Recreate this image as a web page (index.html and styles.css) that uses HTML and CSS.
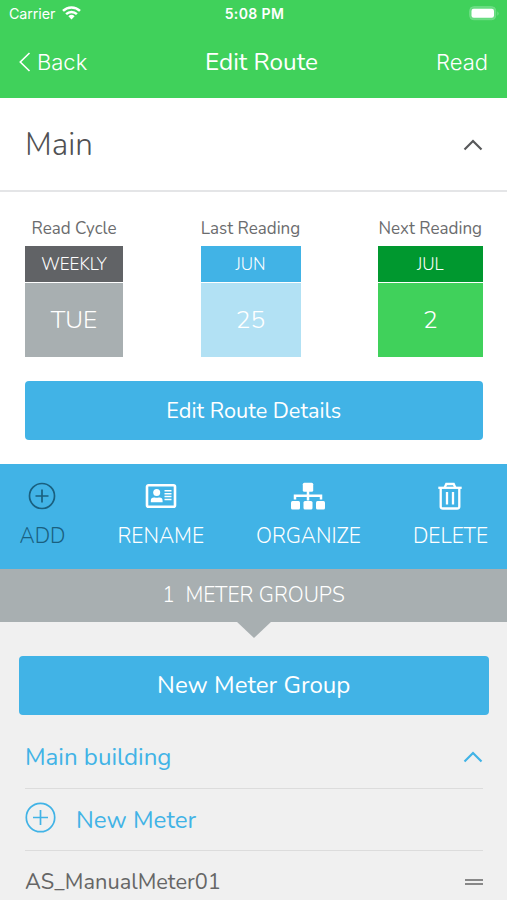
FILE: index.html
```html
<!DOCTYPE html>
<html lang="en">
<head>
<meta charset="utf-8">
<title>Edit Route</title>
<link rel="stylesheet" href="styles.css">
</head>
<body>
<header class="header">
  <div class="status">
    <div class="carrier"><span>Carrier</span>
      <svg width="19" height="14" viewBox="0 0 19 14"><g fill="none" stroke="#fff" stroke-width="2.500"><path d="M1 4.900a12.200 12.200 0 0 1 17 0"/><path d="M4.100 8.200a7.800 7.800 0 0 1 10.800 0"/></g><path d="M6.400 10.300a4.500 4.500 0 0 1 6.200 0L9.500 13.600z" fill="#fff"/></svg>
    </div>
    <span class="time">5:08 PM</span>
    <div class="battery"><svg width="31" height="15" viewBox="0 0 31 15"><rect x=".7" y=".7" width="26" height="13" rx="4" fill="#67dc80" stroke="#72de88"/><rect x="2.500" y="2.700" width="22.500" height="9" rx="2.200" fill="#fff"/><path d="M28.500 5.200q2 2.300 0 4.600z" fill="#83e296"/></svg></div>
  </div>
  <nav class="nav">
    <a class="back"><svg width="12" height="20" viewBox="0 0 12 20"><path d="M10.500 1 1.300 10l9.200 9" fill="none" stroke="#fff" stroke-width="1.600"/></svg><span>Back</span></a>
    <h1>Edit Route</h1>
    <a class="read">Read</a>
  </nav>
</header>
<section class="route-title"><h2>Main</h2>
  <svg width="20" height="12" viewBox="0 0 20 12"><path d="M1.500 10.500 10 2l8.500 8.500" fill="none" stroke="#58595b" stroke-width="2.200"/></svg>
</section>
<section class="details">
  <div class="cards">
    <div class="card cycle"><span class="label">Read Cycle</span><div class="top"><span>WEEKLY</span></div><div class="value"><span>TUE</span></div></div>
    <div class="card last"><span class="label">Last Reading</span><div class="top"><span>JUN</span></div><div class="value"><span>25</span></div></div>
    <div class="card next"><span class="label">Next Reading</span><div class="top"><span>JUL</span></div><div class="value"><span>2</span></div></div>
  </div>
  <button class="btn edit"><span>Edit Route Details</span></button>
</section>
<section class="toolbar">
  <div class="tool add"><svg width="28" height="28" viewBox="0 0 28 28"><g fill="none" stroke="#1a607f" stroke-width="1.700"><circle cx="14" cy="14" r="12.500"/><path d="M14 7.500v13M7.500 14h13"/></g></svg><span>ADD</span></div>
  <div class="tool rename"><svg width="32" height="28" viewBox="0 0 32 28"><rect x="2" y="3.300" width="28" height="21.400" rx="1.500" fill="none" stroke="#fff" stroke-width="2.600"/><g fill="#fff"><circle cx="11.700" cy="10.400" r="3.500"/><path d="M5.800 20.200v-1.500q0-3.300 3.200-3.300h.7q2 .9 4 0h.7q3.200 0 3.200 3.300v1.500z"/><path d="M19.500 8h7v1.500h-7zM19.500 10.900h7v1.500h-7zM19.500 13.800h7v1.500h-7zM19.500 16.700h7v1.500h-7z"/></g></svg><span>RENAME</span></div>
  <div class="tool organize"><svg width="36" height="28" viewBox="0 0 36 28"><g fill="#fff"><rect x="12.800" y=".7" width="10.400" height="9" rx="1.500"/><rect x="1" y="19" width="9" height="8.500" rx="1.500"/><rect x="13.500" y="19" width="9" height="8.500" rx="1.500"/><rect x="26" y="19" width="9" height="8.500" rx="1.500"/></g><path d="M5 17.500v-3.700h26v3.700M18 9v9.500" fill="none" stroke="#fff" stroke-width="2.500"/></svg><span>ORGANIZE</span></div>
  <div class="tool delete"><svg width="24" height="28" viewBox="0 0 24 28"><g fill="none" stroke="#fff" stroke-width="2.300"><path d="M.3 5.800h23.400"/><path d="M6.500 6 8.300 2h7.400L17.500 6"/><path d="M2.700 6v18.500q0 2 2 2h14.600q2 0 2-2V6"/><path d="M9 10v12.500M15 10v12.500"/></g></svg><span>DELETE</span></div>
</section>
<div class="groups-bar"><span>1&nbsp; METER GROUPS</span></div>
<main class="groups">
  <button class="btn new-group"><span>New Meter Group</span></button>
  <div class="row building"><span>Main building</span><svg width="20" height="12" viewBox="0 0 20 12"><path d="M1.500 10.500 10 2l8.500 8.500" fill="none" stroke="#41b3e6" stroke-width="2.200"/></svg></div>
  <div class="row new-meter"><svg width="31" height="31" viewBox="0 0 31 31"><g fill="none" stroke="#41b3e6" stroke-width="1.700"><circle cx="15.500" cy="15.500" r="14.200"/><path d="M15.500 8v15M8 15.500h15"/></g></svg><span>New Meter</span></div>
  <div class="row meter"><span>AS_ManualMeter01</span><i class="handle"></i></div>
</main>
</body>
</html>
```
FILE: styles.css
```css
* { box-sizing: border-box; }
html, body { margin: 0; height: 900px; overflow: hidden; }
body { width: 507px; background: #f0f0f0; color: #6b6c6e; font-family: Nunito, "Open Sans", sans-serif; font-weight: 400; }
svg { display: block; flex: none; }
span, h1, h2 { white-space: nowrap; }
h1, h2 { margin: 0; font-weight: inherit; }
.header { height: 98px; background: #40d15b; color: #fff; }
.status { height: 28px; padding: 0 7px 0 9px; display: grid; grid-template-columns: 1fr auto 1fr; align-items: center; font: 400 14.3px/28px Inter, sans-serif; }
.carrier { display: flex; align-items: center; gap: 7px; margin-top: -2px; }
.carrier span { letter-spacing: -.1px; padding-top: 1px; }
.time { font-weight: 600; font-size: 14px; letter-spacing: .4px; }
.battery { justify-self: end; margin-top: -2px; }
.nav { height: 68px; padding: 0 19px; display: grid; grid-template-columns: 1fr auto 1fr; align-items: center; font: 300 22px/68px Inter, sans-serif; }
.back { display: flex; align-items: center; gap: 6px; }
.nav h1 { font: 400 24.3px/68px Nunito, "Open Sans", sans-serif; margin-left: 16px; }
.read { justify-self: end; }
.route-title { height: 94px; background: #fff; border-bottom: 2px solid #e4e5e7; padding: 0 24px 0 25px; display: flex; align-items: center; justify-content: space-between; }
.route-title h2 { font-size: 31.5px; font-weight: 350; color: #505153; }
.route-title svg { margin-top: 2px; }
.details { height: 272px; background: #fff; padding: 24px 24.5px 0 25px; }
.cards { display: flex; justify-content: space-between; }
.card { display: flex; flex-direction: column; }
.cycle { width: 98px; } .last { width: 100px; } .next { width: 104.5px; }
.label { font-size: 17px; line-height: 26px; height: 30px; align-self: center; }
.top { height: 36px; display: flex; align-items: center; justify-content: center; font-size: 17px; font-weight: 350; color: #fff; margin-bottom: 1px; }
.value { height: 74px; display: flex; align-items: center; justify-content: center; font-size: 24.5px; font-weight: 350; color: #fff; }
.cycle .top { background: #616366; } .cycle .value { background: #a8afb1; }
.last .top { background: #41b3e6; } .last .value { background: #b2e1f4; }
.next .top { background: #00982f; } .next .value { background: #40d15b; }
.btn { display: flex; width: 100%; height: 59px; align-items: center; justify-content: center; border: 0; border-radius: 4px; background: #41b3e6; color: #fff; font: inherit; padding: 0; }
.btn.edit { margin-top: 24px; font-size: 21.7px; }
.toolbar { height: 105px; background: #41b3e6; padding: 18px 19px 0 19.5px; display: flex; justify-content: space-between; color: #fff; font-size: 21px; font-weight: 350; }
.tool { display: flex; flex-direction: column; align-items: center; gap: 10px; line-height: 32px; }
.add { color: #1a607f; }
.add svg { margin-left: -1px; }
.groups-bar { position: relative; height: 52.5px; background: #a8afb1; color: #fff; display: flex; align-items: center; justify-content: center; font-size: 21px; font-weight: 350; }
.groups-bar::after { content: ""; position: absolute; top: 52px; left: 236px; width: 36px; height: 17px; background: #a8afb1; clip-path: polygon(0 0, 100% 0, 50% 100%); }
.groups { padding: 34.5px 18.5px 0 19px; color: #41b3e6; font-size: 24.1px; }
.btn.new-group { height: 58.5px; }
.row { margin: 0 6px; height: 62px; display: flex; align-items: center; justify-content: space-between; border-bottom: 1px solid #dcdcdc; }
.building { height: 74.5px; padding-top: 11px; }
.building span, .new-meter span { padding-top: 2px; }
.new-meter { justify-content: flex-start; gap: 20px; }
.new-meter svg { margin-top: -5px; }
.meter { color: #666; font-size: 21.8px; border: 0; }
.handle { width: 18px; height: 6px; border: solid #888; border-width: 2px 0; }
```
